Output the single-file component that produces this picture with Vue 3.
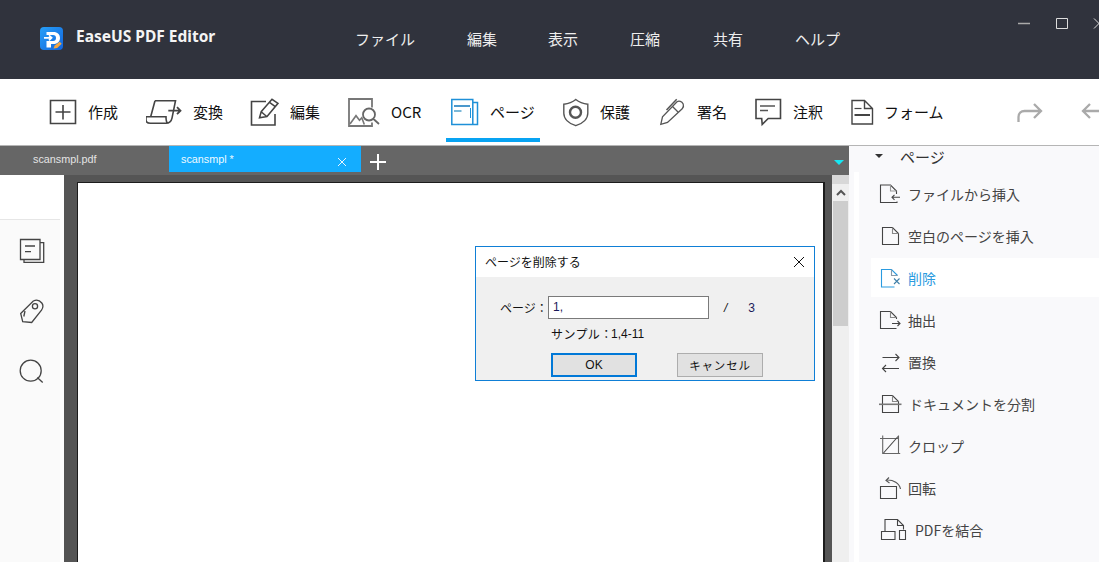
<script setup>
const ring = (cx, cy, r) => `M${cx - r} ${cy}a${r} ${r} 0 1 0 ${2 * r} 0a${r} ${r} 0 1 0 ${-2 * r} 0`

const ink = '#444'
const blue = '#1e90d8'

const tools = [
  { label: '作成', x: 48, box: 40, w: 98, paths: [
    { d: 'M50.500 100.500h25v23h-25zM63 105v14.500M55.500 112h15', s: ink, w: 1.6 } ] },
  { label: '変換', x: 146, box: 47, w: 104, paths: [
    { d: 'M155 100.700h20.500l-3.500 17.500c-.8 3.700-3 5.100-6 5.100H150.500c-2.800 0-4.500-1.400-4.500-3.600v-3h20c0 2 0 5 1.500 6.300M155 100.700l-4.300 16', s: ink, w: 1.6 },
    { d: 'M168.300 110.700h12M177 107.200l3.500 3.500-3.500 3.500', s: ink, w: 1.8 } ] },
  { label: '編集', x: 250, box: 40, w: 98, paths: [
    { d: 'M266 101.500h-14.500v23.500h23.500v-11', s: ink, w: 1.6 },
    { d: 'M259.500 117.700l1.700-6 10.800-12.400 6 4-11 13.200zM261.200 111.700l5.800 5M269.500 102.300l5.800 4.300', s: ink, w: 1.5 } ] },
  { label: 'OCR', x: 348, box: 43, w: 103, paths: [
    { d: 'M372 107.500V99h-23v27h23v-3.500', s: '#777', w: 1.8 },
    { d: 'M350 124l6-8.300 3.500 4.500 2.300-2.500 2.500 6.800', s: '#777', w: 1.6 },
    { d: ring(369, 114.500, 6) + 'M373.500 119l5.500 5', s: '#666', w: 1.8 } ] },
  { label: 'ページ', x: 451, box: 39, w: 111, paths: [
    { d: 'M451.800 99.500h21v25h-21zM473 102.500h4.500v22h-5', s: blue, w: 1.5 },
    { d: 'M454 106h16', s: '#1e7fc0', w: 1.6 },
    { d: 'M454 111h7.500', s: '#5aa7cf', w: 1.6 },
    { d: 'M470.500 108v10', s: blue, w: 1 } ] },
  { label: '保護', x: 562, box: 38, w: 97, paths: [
    { d: 'M575.800 99.500c3 2.500 7 4.200 12 4.700v9c0 5.600-5 10.300-12 12.500-7-2.200-12-6.900-12-12.500v-9c5-.5 9-2.200 12-4.700z', s: '#555', w: 1.4 },
    { d: ring(575.500, 112.300, 5.500), s: '#555', w: 2.4 } ] },
  { label: '署名', x: 659, box: 38, w: 96, paths: [
    { d: 'M660.800 124.300l1.700-7.500 14.500-15c2-1.500 4.800-.3 6.200 2.200.6 1.600.2 3.400-1 4.800l-14.700 13.600zM672.500 106.500l6 6', s: '#555', w: 1.3 },
    { d: 'M666.500 110l10.200-10.700', s: '#555', w: 1.5 } ] },
  { label: '注釈', x: 755, box: 38, w: 95, paths: [
    { d: 'M756 99.500h24.500v19h-12.300l-6 6-.5-6H756z', s: ink, w: 1.6 },
    { d: 'M760 106h15M760 110.500h8', s: '#555', w: 1.6 } ] },
  { label: 'フォーム', x: 850, box: 34, w: 100, paths: [
    { d: 'M852 100.500h12.500l8 8v15.500H852zM864.500 100.500v8h8', s: ink, w: 1.4 },
    { d: 'M854.500 108.500h7', s: ink, w: 1.2 },
    { d: 'M854.500 115h15.500', s: ink, w: 2 } ] },
]

const pageOutline = (x, y, w, h) =>
  `M${x} ${y}h${w - 6}l6 6v${h - 6}h${-w}z`

const rows = [
  { label: 'ファイルから挿入', shift: 0, paths: [
    { d: 'M896.500 194v-3l-6-6h-10v17.500h16.500v-1', s: ink },
    { d: 'M890.500 185v6h6', s: '#999' },
    { d: 'M900 197.300h-8M894.500 194.800l-2.500 2.500 2.500 2.500', s: ink } ] },
  { label: '空白のページを挿入', shift: 0, paths: [
    { d: pageOutline(882.500, 227.500, 16, 17), s: ink },
    { d: 'M892.500 227.500v6h6', s: '#888' } ] },
  { label: '削除', shift: 0, active: true, paths: [
    { d: 'M897.500 275.500l-6-6h-10v17.500h13', s: '#2a9be0' },
    { d: 'M891.500 269.500v6h6', s: '#8a9aa8' },
    { d: 'M894 278.500l5.500 5.500M899.500 278.500l-5.500 5.500', s: '#3f7fa8' } ] },
  { label: '抽出', shift: 0, paths: [
    { d: 'M896.500 319v-1.500l-6-6h-10v17h16', s: ink },
    { d: 'M890.500 311.500v6h6', s: '#888' },
    { d: 'M892 323.500h8M897.500 321l2.500 2.500-2.500 2.500', s: ink } ] },
  { label: '置換', shift: 0, paths: [
    { d: 'M882.500 357.500h16.500M895.500 354l3.500 3.500-3.500 3.500M899 368.500h-16.500M886 365l-3.500 3.500 3.500 3.500', s: ink } ] },
  { label: 'ドキュメントを分割', shift: 1, paths: [
    { d: pageOutline(882.500, 395.500, 16, 17), s: ink },
    { d: 'M892.500 395.500v6h6', s: '#888' },
    { d: 'M879 404.300h22.500', s: '#777', w: 1.6 } ] },
  { label: 'クロップ', shift: 0, paths: [
    { d: 'M880 438.500h18.500v-3M882.700 435.500v18h17.500M898.500 453.500v-15', s: '#666' },
    { d: 'M883.500 453l14.500-16.500', s: ink } ] },
  { label: '回転', shift: 0, paths: [
    { d: 'M880.500 486.500h16v12h-16z', s: ink },
    { d: 'M900.500 489c-1-5.500-7-9.500-14-9M889 477.500l-3 3 3.500 2.500', s: '#555' } ] },
  { label: 'PDFを結合', shift: 7, paths: [
    { d: 'M885 531v-11.500h12.500l6 6v4M897.500 519.500v6h6', s: ink },
    { d: 'M881.500 531.500h13.500v8h-13.500zM899.500 530.500h6v9h-6z', s: ink } ] },
]

const sideIcons = [
  { y: 231, paths: [
    'M20.500 239.500h19.500v20h-19.500zM40 242.700h3.700v19.700h-19.700v-3',
    'M25 246h10M25 251.700h6' ] },
  { y: 293, paths: [
    'M33.300 302c3-1.500 6.500-.5 8.500 2 1.500 2 1.200 5-.3 7.200l-9.800 12.300-9-.8-2-8.200z',
    ring(35, 307.300, 2.600),
    'M25 312l-1.200 5.500' ] },
  { y: 354, paths: [
    ring(30.700, 371.700, 10.500),
    'M37.300 378.500l5.400 5' ] },
]
</script>

<template>
  <div class="app">
    <header class="titlebar">
      <svg class="logo" viewBox="40 27 23 23" aria-hidden="true">
        <defs>
          <linearGradient id="logoFill" x1="0" y1="0" x2="1" y2="1">
            <stop offset="0" stop-color="#27a0f8" />
            <stop offset="1" stop-color="#1264dc" />
          </linearGradient>
        </defs>
        <rect x="40" y="27" width="23" height="23" rx="4" fill="url(#logoFill)" />
        <path d="M46.500 32h7c4 0 6.500 2.500 6.500 6s-2.500 6-6.500 6h-2.500v3.500h-4.500v-6.500h6.500c2 0 3-1.200 3-3s-1-3-3-3h-6.500z" fill="#fff" />
        <path d="M44 37.800h7.500M49 35.300l2.600 2.500-2.600 2.500" fill="none" stroke="#fff" stroke-width="1.700" />
        <path d="M53.500 48.500l1.200-3 5-3.800 2 2-4.500 4.300z" fill="#f4a640" />
      </svg>
      <div class="brand">EaseUS PDF Editor</div>
      <nav class="menu">
        <span>ファイル</span><span>編集</span><span>表示</span><span>圧縮</span><span>共有</span><span>ヘルプ</span>
      </nav>
      <svg class="winctl" viewBox="1010 10 89 30" aria-hidden="true">
        <path d="M1018 23.500h12" stroke="#aaa" stroke-width="1.500" fill="none" />
        <path d="M1056.500 18.500h11v10h-11z" stroke="#ddd" fill="none" />
        <path d="M1094 18.500l10 10M1104 18.500l-10 10" stroke="#ddd" fill="none" />
      </svg>
    </header>

    <section class="toolbar">
      <div v-for="t in tools" :key="t.label" class="tool" :class="{ on: t.label === 'ページ' }" :style="{ width: t.w + 'px' }">
        <svg :width="t.box" height="40" :viewBox="`${t.x} 92 ${t.box} 40`" aria-hidden="true">
          <path v-for="(p, i) in t.paths" :key="i" :d="p.d" :stroke="p.s" :stroke-width="p.w" fill="none" />
        </svg>
        <span>{{ t.label }}</span>
      </div>
      <svg class="history" viewBox="1016 92 83 40" aria-hidden="true">
        <path d="M1018.500 122v-5c0-3.500 2.500-6 6-6h16M1034 104l7 7-7 7" fill="none" stroke="#aaa" stroke-width="2.300" />
        <path d="M1090 104l-7 7 7 7M1083 111h16" fill="none" stroke="#aaa" stroke-width="2.300" />
      </svg>
    </section>

    <section class="work">
      <div class="center">
        <div class="tabs">
          <div class="tab">scansmpl.pdf</div>
          <div class="tab active">
            <span>scansmpl *</span>
            <svg width="10" height="10" viewBox="0 0 10 10" aria-hidden="true"><path d="M1 1l8 8M9 1l-8 8" stroke="#e8f6ff" fill="none" /></svg>
          </div>
          <svg class="plus" width="18" height="18" viewBox="0 0 18 18" aria-hidden="true"><path d="M1 9h16M9 1v16" stroke="#fff" stroke-width="2" fill="none" /></svg>
          <i class="tabs-arrow"></i>
        </div>
        <div class="viewer">
          <aside class="rail">
            <div class="rail-top"></div>
            <div class="rail-tools">
              <svg v-for="s in sideIcons" :key="s.y" width="60" height="40" :viewBox="`0 ${s.y} 60 40`" aria-hidden="true" class="rail-icon">
                <path v-for="(d, i) in s.paths" :key="i" :d="d" stroke="#444" stroke-width="1.300" fill="none" />
              </svg>
            </div>
          </aside>
          <div class="canvas"><div class="page"></div></div>
          <div class="scroll">
            <div class="scroll-gap"></div>
            <div class="scroll-up">
              <svg width="10" height="7" viewBox="0 0 10 7" aria-hidden="true"><path d="M1 6l4-4 4 4" stroke="#555" stroke-width="2" fill="none" /></svg>
            </div>
            <div class="thumb"></div>
          </div>
        </div>
      </div>

      <aside class="panel">
        <div class="panel-head"><i class="caret"></i><span>ページ</span></div>
        <ul class="rows">
          <li v-for="(r, idx) in rows" :key="r.label" :class="{ active: r.active }">
            <svg width="37" height="42" :viewBox="`871 ${173 + 42 * idx} 37 42`" aria-hidden="true">
              <path v-for="(p, i) in r.paths" :key="i" :d="p.d" :stroke="p.s" :stroke-width="p.w || 1.100" fill="none" />
            </svg>
            <span :style="{ marginLeft: r.shift + 'px' }">{{ r.label }}</span>
          </li>
        </ul>
      </aside>
    </section>

    <div class="dialog">
      <div class="dialog-title">
        <span>ページを削除する</span>
        <svg width="12" height="12" viewBox="0 0 12 12" aria-hidden="true"><path d="M1 1l10 10M11 1L1 11" stroke="#111" fill="none" /></svg>
      </div>
      <div class="dialog-body">
        <div class="field">
          <label>ページ：</label>
          <div class="input">1,</div>
          <span class="slash">/</span>
          <span class="total">3</span>
        </div>
        <div class="sample"><span class="sample-key">サンプル：</span><span class="sample-val">1,4-11</span></div>
        <div class="buttons">
          <div class="btn primary">OK</div>
          <div class="btn cancel">キャンセル</div>
        </div>
      </div>
    </div>
  </div>
</template>

<style scoped>
.app {
  position: relative;
  width: 1099px;
  height: 562px;
  overflow: hidden;
  background: #fff;
  font-family: "Noto Sans CJK JP", "Noto Sans", sans-serif;
  color: #222;
}
.titlebar {
  height: 79px;
  background: #30333d;
  display: flex;
  align-items: flex-start;
  padding-left: 40px;
  box-sizing: border-box;
}
.logo { width: 23px; height: 23px; margin-top: 27px; flex: none; }
.brand {
  width: 279px;
  margin: 26px 0 0 13px;
  color: #f4f4f4;
  font: 700 15.500px/20px "Noto Sans", sans-serif;
  white-space: nowrap;
}
.menu {
  display: grid;
  grid-template-columns: 112px 81px 82px 83px 82px 45px;
  margin-top: 28px;
  color: #eee;
  font-size: 15px;
  line-height: 22px;
  white-space: nowrap;
}
.winctl { width: 89px; height: 30px; margin: 10px 0 0 auto; flex: none; }

.toolbar {
  height: 66px;
  border-bottom: 1px solid #b5b5b5;
  display: flex;
  align-items: flex-start;
  padding-left: 48px;
}
.tool {
  position: relative;
  flex: none;
  display: flex;
  align-items: center;
  height: 40px;
  margin-top: 13px;
  font-size: 15px;
  color: #111;
  white-space: nowrap;
}
.tool svg { flex: none; }
.tool span { padding-bottom: 2px; }
.tool.on::after {
  content: "";
  position: absolute;
  left: -5px;
  top: 46px;
  width: 94px;
  height: 4px;
  background: #08a3f2;
}
.history { width: 83px; height: 40px; margin: 13px 0 0 auto; flex: none; }

.work { display: flex; height: 416px; }
.center { width: 849px; flex: none; display: flex; flex-direction: column; }
.tabs {
  height: 29px;
  flex: none;
  background: #666;
  display: flex;
  align-items: flex-start;
  position: relative;
}
.tab {
  width: 169px;
  height: 26px;
  box-sizing: border-box;
  padding-left: 33px;
  font: 10.800px/26px "Liberation Sans", sans-serif;
  color: #e4e4e4;
}
.tab.active {
  width: 192px;
  padding: 0 14px 0 12px;
  background: #14adff;
  color: #eefaff;
  display: flex;
  align-items: center;
  justify-content: space-between;
}
.tab.active svg { margin-top: 6px; }
.plus { margin: 7px 0 0 8px; }
.tabs-arrow {
  position: absolute;
  right: 5px;
  top: 14px;
  width: 0;
  height: 0;
  border-left: 5px solid transparent;
  border-right: 5px solid transparent;
  border-top: 5px solid #16e6f2;
}
.viewer { flex: 1; display: flex; min-height: 0; }
.rail { width: 64px; flex: none; background: #fff; }
.rail-top { height: 44px; width: 60px; border-bottom: 1px solid #e6e6e6; }
.rail-tools {
  width: 60px;
  height: 342px;
  background: #fafafa;
  padding-top: 11px;
  display: flex;
  flex-direction: column;
  gap: 21px;
}
.rail-icon { display: block; flex: none; }
.canvas {
  flex: 1;
  background: #555;
  padding: 7px 7px 0 13px;
  min-width: 0;
}
.page {
  height: 100%;
  background: #fff;
  border: 1px solid #1c1c1c;
  border-right-width: 2px;
  border-bottom: 0;
}
.scroll { width: 17px; flex: none; background: #efefef; }
.scroll-gap { height: 9px; background: #d8d8d8; }
.scroll-up { height: 17px; display: flex; align-items: center; justify-content: center; }
.thumb { width: 15px; height: 125px; margin-left: 1px; background: #cdcdcd; }

.panel { position: relative; flex: 1; background: #f9f9fb; }
.panel::before {
  content: "";
  position: absolute;
  left: 5px;
  top: 26px;
  bottom: 0;
  width: 5px;
  background: #fff;
}
.panel-head {
  height: 22px;
  padding: 0 0 5px 26px;
  display: flex;
  align-items: center;
  font-size: 15px;
  color: #333;
  line-height: 22px;
}
.caret {
  width: 0;
  height: 0;
  margin: -2px 17px 0 0;
  border-left: 4px solid transparent;
  border-right: 4px solid transparent;
  border-top: 4px solid #333;
}
.rows { list-style: none; margin: 0; padding: 0 0 0 22px; }
.rows li {
  height: 42px;
  display: flex;
  align-items: center;
  font-size: 14px;
  color: #444;
  white-space: nowrap;
}
.rows svg { flex: none; }
.rows li.active {
  color: #2a9be0;
  background: linear-gradient(#fff, #fff) no-repeat 0 1px / 100% 39px;
}

.dialog {
  position: absolute;
  left: 475px;
  top: 246px;
  width: 340px;
  height: 135px;
  box-sizing: border-box;
  border: 1px solid #0f7fd6;
  background: #f0f0f0;
  display: flex;
  flex-direction: column;
  font-size: 12px;
  color: #111;
}
.dialog-title {
  height: 30px;
  flex: none;
  background: #fff;
  display: flex;
  align-items: center;
  justify-content: space-between;
  padding: 0 9px;
  line-height: 18px;
}
.dialog-body { flex: 1; padding-top: 19px; }
.field { display: flex; align-items: center; height: 23px; padding-left: 24px; }
.field label { width: 48px; flex: none; }
.input {
  width: 161px;
  height: 23px;
  box-sizing: border-box;
  border: 1px solid #7a7a7a;
  background: #fff;
  padding-left: 4px;
  font: 12px/21px "Liberation Sans", sans-serif;
  color: #1a1a5a;
}
.slash { margin-left: 15px; font: italic 12px "Liberation Sans", sans-serif; }
.total { margin-left: 21px; font: 12px "Liberation Sans", sans-serif; color: #1a1a5a; }
.sample { display: flex; margin: 6px 0 0 75px; height: 18px; line-height: 18px; }
.sample-key { width: 60px; letter-spacing: 0.400px; white-space: nowrap; }
.sample-val { font: 12px/18px "Liberation Sans", sans-serif; }
.buttons { display: flex; gap: 40px; margin: 10px 0 0 75px; }
.btn {
  width: 86px;
  height: 24px;
  box-sizing: border-box;
  border: 1px solid #adadad;
  background: #e1e1e1;
  display: flex;
  align-items: center;
  justify-content: center;
  font-size: 11.500px;
}
.btn.cancel { letter-spacing: 0.800px; }
.btn.primary {
  border: 2px solid #0078d7;
  font: 12px "Liberation Sans", sans-serif;
}
</style>

<style>
html, body { margin: 0; overflow: hidden; background: #fff; }
</style>
